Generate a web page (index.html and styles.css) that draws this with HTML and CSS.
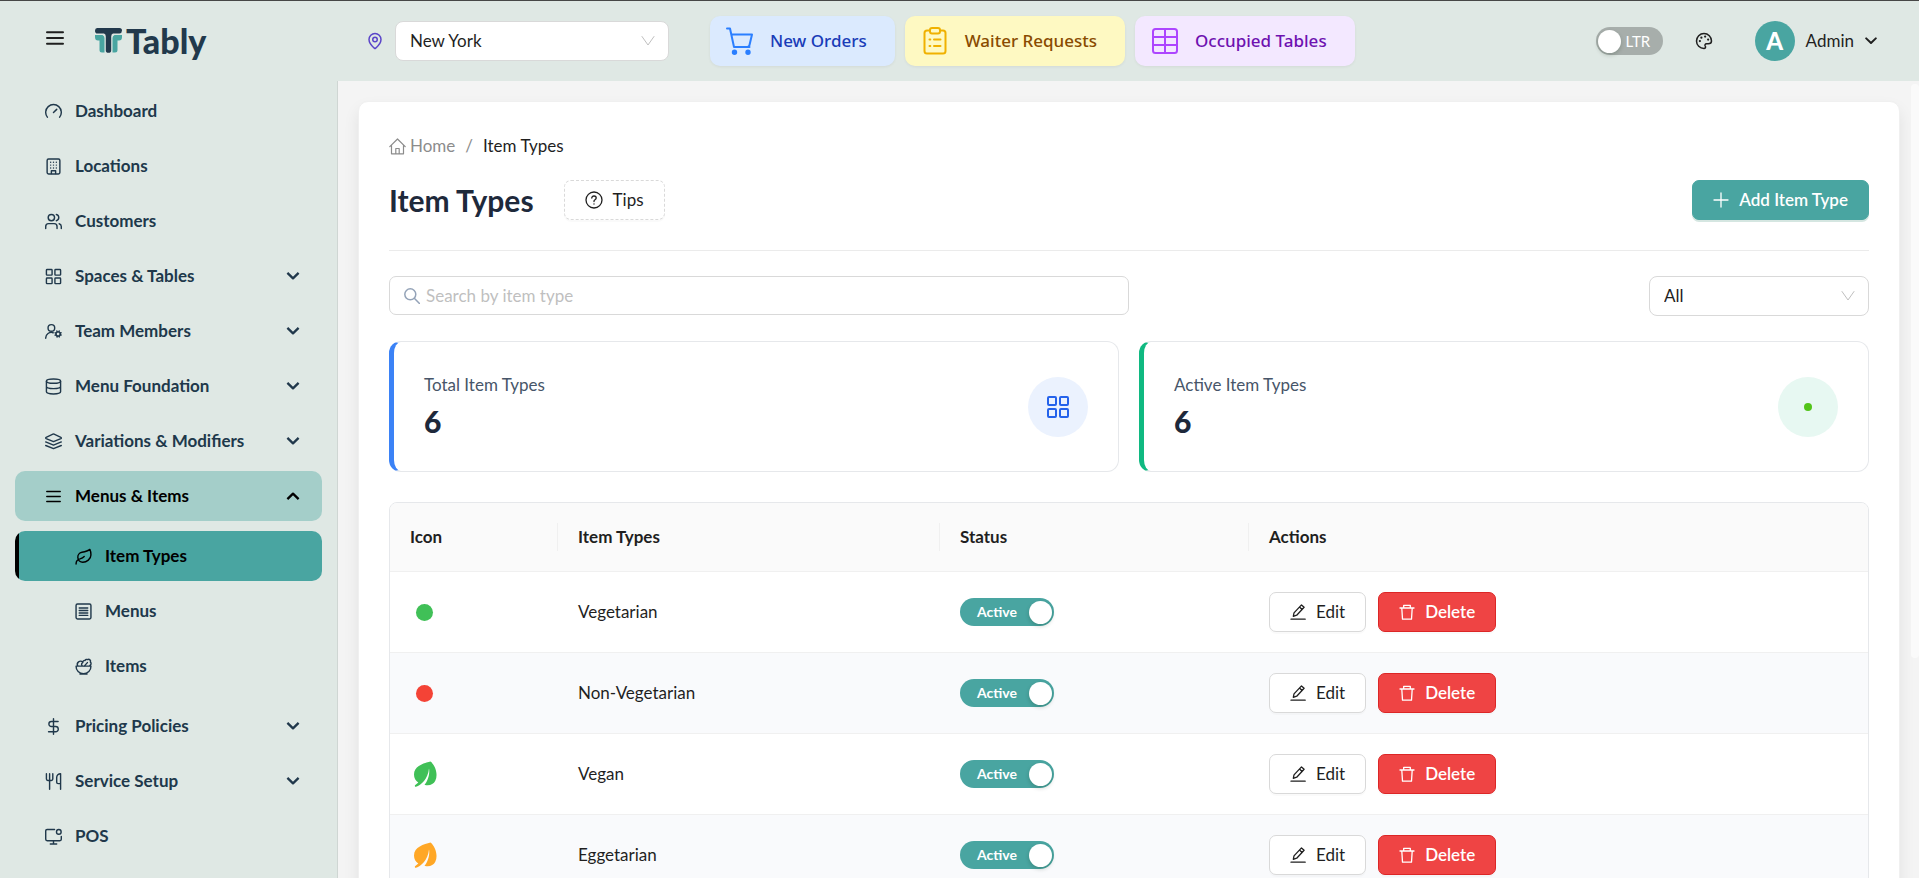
FILE: index.html
```html
<!DOCTYPE html>
<html lang="en">
<head>
<meta charset="utf-8">
<meta name="viewport" content="width=device-width, initial-scale=1">
<title>Item Types - Tably</title>
<link rel="stylesheet" href="styles.css">
</head>
<body>
<svg class="sprite" aria-hidden="true">
  <symbol id="chevron" viewBox="0 0 12 12"><path d="M1.2 3.400 6 8l4.800-4.600"/></symbol>
  <symbol id="select-arrow" viewBox="0 0 14 12"><path d="M1 1.500 7 10l6-8.500"/></symbol>
  <symbol id="edit" viewBox="0 0 16 16"><path d="M1 15.200h14.200M3.300 12.300l.7-3.400 7.500-8 2.600 2.400-7.400 7.900zM9.500 3.100l2.600 2.400"/></symbol>
  <symbol id="trash" viewBox="0 0 16 16"><path d="M1 4h14M4.700 4V1.300h6.600V4M2.800 4l.7 11.200h9L13.200 4"/></symbol>
  <symbol id="grid" viewBox="0 0 24 24"><rect x="2" y="2" width="8" height="8" rx="1"/><rect x="14" y="2" width="8" height="8" rx="1"/><rect x="14" y="14" width="8" height="8" rx="1"/><rect x="2" y="14" width="8" height="8" rx="1"/></symbol>
  <symbol id="leaf-solid" viewBox="0 0 24 26"><path d="M17.500.500C11 2 1 5 1 13.500c0 3.500 1.600 6.500 4.300 8L2 24.300c-.4.800 0 1.500 1 1.500 5-1.500 12-8 13-18.300 1 5-1 12.500-4.500 16.300 4.500 1.500 9-.3 10.800-4C25.500 13 22 4 17.500.500Z"/></symbol>
</svg>

<header class="topbar">
  <div class="brand">
    <button class="icon-button" type="button" aria-label="Toggle menu"><svg class="icon burger" viewBox="0 0 18 14"><path d="M1 1.200h16M1 7h16M1 12.800h16"/></svg></button>
    <a class="logo" href="#">
      <svg class="logo-mark" viewBox="0 0 27 26" aria-hidden="true">
        <path fill="#49a5a1" d="M0 7h7.500Q9.500 8 9.500 10v14.500H7Q4.500 24.500 4.500 22V12.500H3Q0 12.500 0 9ZM27 7h-7.500q-2 1-2 3v14.500h2.500q2.500 0 2.500-2.500v-9.500h1.500q3 0 3-3.500Z"/>
        <path fill="#22394c" d="M2.500 0h22Q27 0 27 2.500T24.500 5.500H18q-1.800.5-1.800 3v14q0 2.300-2.700 2.300t-2.700-2.300v-14q0-2.500-1.800-3H2.500Q0 5.500 0 2.700T2.500 0Z"/>
      </svg>
      <span>Tably</span>
    </a>
  </div>
  <div class="location">
    <svg class="icon pin" viewBox="0 0 24 24"><path d="M20 10c0 5-5.500 10.200-7.400 11.800a1 1 0 0 1-1.200 0C9.500 20.200 4 15 4 10a8 8 0 0 1 16 0"/><circle cx="12" cy="10" r="3"/></svg>
    <div class="select-box select-location">
      <select class="select" aria-label="Location"><option>New York</option></select>
      <svg class="select-arrow"><use href="#select-arrow"/></svg>
    </div>
  </div>
  <nav class="quick" aria-label="Quick links">
    <button class="quick-button orders" type="button"><svg class="icon" viewBox="0 0 28 28"><path d="M1 1.500h3L8 20h15.500M5.200 7.500H26l-2.500 10.500q-.5 2-2.500 2"/><circle class="solid" cx="8.500" cy="25.200" r="1.700"/><circle class="solid" cx="22" cy="25.200" r="1.700"/></svg>New Orders</button>
    <button class="quick-button waiter" type="button"><svg class="icon" viewBox="0 0 28 28"><path d="M9 3.500H6q-2.500 0-2.500 2.500v18q0 2.500 2.500 2.500h16q2.500 0 2.500-2.500V6q0-2.500-2.500-2.500h-3"/><rect x="9" y="1" width="10" height="5.500" rx="2"/><path d="M8.500 12.500h.8M13 12.500h6.500M8.500 19h.8M13 19h6.500"/></svg>Waiter Requests</button>
    <button class="quick-button tables" type="button"><svg class="icon" viewBox="0 0 28 28"><rect x="2" y="2" width="24" height="24" rx="2.500"/><path d="M2 10h24M2 18h24M14 2v24"/></svg>Occupied Tables</button>
  </nav>
  <div class="account">
    <label class="direction"><input type="checkbox" role="switch"><span class="knob"></span><span>LTR</span></label>
    <button class="icon-button" type="button" aria-label="Theme"><svg class="icon palette" viewBox="0 0 24 24"><path d="M12 22a10 10 0 1 1 10-10c0 2.500-2 3.800-4.300 3.800h-2.400c-1.800 0-2.600 1.600-1.600 3 .9 1.200.2 3.200-1.700 3.200Z"/><path class="dots" d="M6.500 12h.01M8.500 7.500h.01M13.500 6h.01M17.500 10h.01"/></svg></button>
    <button class="profile" type="button"><span class="avatar">A</span><span>Admin</span><svg class="icon caret"><use href="#chevron"/></svg></button>
  </div>
</header>

<div class="shell">
  <aside class="sidebar">
    <ul class="menu">
      <li><a class="menu-item" href="#"><svg class="icon" viewBox="0 0 24 24"><path d="m12 13.500 4.500-4.500M3.340 20a11 11 0 1 1 17.320 0"/></svg><span>Dashboard</span></a></li>
      <li><a class="menu-item" href="#"><svg class="icon" viewBox="0 0 24 24"><rect x="3" y="1.500" width="18" height="21" rx="2"/><path d="M9 22v-4h6v4M8 6h.01M16 6h.01M12 6h.01M12 10h.01M12 14h.01M16 10h.01M16 14h.01M8 10h.01M8 14h.01"/></svg><span>Locations</span></a></li>
      <li><a class="menu-item" href="#"><svg class="icon" viewBox="0 0 24 24"><path d="M17 22v-3a4 4 0 0 0-4-4H5a4 4 0 0 0-4 4v3M23 22v-3a4 4 0 0 0-3-3.870M16 2.130a4.500 4.500 0 0 1 0 8.750"/><circle cx="9" cy="6.500" r="4.500"/></svg><span>Customers</span></a></li>
      <li><a class="menu-item" href="#"><svg class="icon"><use href="#grid"/></svg><span>Spaces &amp; Tables</span><svg class="menu-caret"><use href="#chevron"/></svg></a></li>
      <li><a class="menu-item" href="#"><svg class="icon" viewBox="0 0 24 24"><path d="M1 21.500a8 8 0 0 1 10.500-7.800"/><circle cx="9" cy="7" r="4.700"/><circle cx="18.500" cy="15.500" r="3"/><path d="m22.700 17-1.200-.4M15.500 14.300l-1.200-.4M17 19.700l.4-1.200M19.600 12.500l.4-1.200M20.200 19.700l-.5-1.200M17.300 12.500l-.5-1.200M14.300 17.200l1.200-.5M21.500 14.300l1.200-.5"/></svg><span>Team Members</span><svg class="menu-caret"><use href="#chevron"/></svg></a></li>
      <li><a class="menu-item" href="#"><svg class="icon" viewBox="0 0 24 24"><ellipse cx="12" cy="4.500" rx="10" ry="3"/><path d="M2 4.500v15a10 3 0 0 0 20 0v-15M2 12a10 3 0 0 0 20 0"/></svg><span>Menu Foundation</span><svg class="menu-caret"><use href="#chevron"/></svg></a></li>
      <li><a class="menu-item" href="#"><svg class="icon" viewBox="0 0 24 24"><path d="M12.830 1.680a2 2 0 0 0-1.660 0L1.600 6.080a1 1 0 0 0 0 1.830l9.580 3.910a2 2 0 0 0 1.660 0l9.580-3.900a1 1 0 0 0 0-1.830ZM23 12.650l-10.170 4.160a2 2 0 0 1-1.660 0L1 12.650M23 17.650l-10.170 4.160a2 2 0 0 1-1.660 0L1 17.650"/></svg><span>Variations &amp; Modifiers</span><svg class="menu-caret"><use href="#chevron"/></svg></a></li>
      <li>
        <a class="menu-item open" href="#"><svg class="icon" viewBox="0 0 24 24"><path d="M2.500 5h19M2.500 12h19M2.500 19h19"/></svg><span>Menus &amp; Items</span><svg class="menu-caret"><use href="#chevron"/></svg></a>
        <ul class="submenu">
          <li><a class="menu-item current" href="#" aria-current="page"><svg class="icon" viewBox="0 0 24 24"><path d="M11 20A7 7 0 0 1 9.800 6.100C15.500 5 18 4.500 21 2c1 2 1.500 4.200 1.500 8 0 5.500-6 10-11.500 10ZM1.500 22.500c0-3.500 2.300-6.500 5.600-7.200C9.500 14.500 12 13 13 12"/></svg><span>Item Types</span></a></li>
          <li><a class="menu-item" href="#"><svg class="icon" viewBox="0 0 24 24"><rect x="1.500" y="1.500" width="21" height="21" rx="2"/><path d="M6 7h12M6 10.500h12M6 14h12M6 17.500h12"/></svg><span>Menus</span></a></li>
          <li><a class="menu-item" href="#"><svg class="icon" viewBox="0 0 24 24"><path d="M7 22.500h10M12 22a10.500 10 0 0 0 10.500-10.500h-21A10.500 10 0 0 0 12 22ZM11.380 11.500a2.600 2.600 0 0 1-.4-5 2.600 2.600 0 0 1 3.200-3 2.600 2.600 0 0 1 3.700-1.200 2.700 2.700 0 0 1 3.800 3.500 2.600 2.600 0 0 1-.6 4.500v1.200M13 11.500l4.500-5M10.900 5.800a4.500 4.500 0 0 0-7 5.500"/></svg><span>Items</span></a></li>
        </ul>
      </li>
      <li><a class="menu-item" href="#"><svg class="icon" viewBox="0 0 24 24"><path d="M12 1v22M18.500 5H9a3.500 3.500 0 0 0 0 7h6a3.500 3.500 0 0 1 0 7.500H5"/></svg><span>Pricing Policies</span><svg class="menu-caret"><use href="#chevron"/></svg></a></li>
      <li><a class="menu-item" href="#"><svg class="icon" viewBox="0 0 24 24"><path d="M2 1v7.500c0 1.100.9 2 2 2h5a2 2 0 0 0 2-2V1M6.500 1v22M22 15V1a5.500 5.500 0 0 0-5.500 5.500V13c0 1.100.9 2 2 2H22Zm0 0v8"/></svg><span>Service Setup</span><svg class="menu-caret"><use href="#chevron"/></svg></a></li>
      <li><a class="menu-item" href="#"><svg class="icon" viewBox="0 0 24 24"><circle cx="19.500" cy="5.500" r="3.300"/><path d="M23 12v4a2 2 0 0 1-2 2H3a2 2 0 0 1-2-2V4a2 2 0 0 1 2-2h10.500M12 18v4.500M7.500 22.500h9"/></svg><span>POS</span></a></li>
    </ul>
  </aside>

  <main class="main">
    <section class="panel">
      <nav class="breadcrumb" aria-label="Breadcrumb">
        <a href="#"><svg class="icon home" viewBox="0 0 17 17"><path d="M.800 8.600 8.500 1l7.700 7.600M2.500 7.500v8.300h12V7.500M6.800 15.500v-5h3.400v5"/></svg>Home</a>
        <span class="slash">/</span>
        <span class="here">Item Types</span>
      </nav>
      <div class="heading">
        <h1>Item Types</h1>
        <button class="button tips" type="button"><svg class="icon" viewBox="0 0 18 18"><circle cx="9" cy="9" r="8"/><path d="M6.800 7.100c0-1.300 1-2.100 2.200-2.100s2.200.8 2.200 2-.9 1.500-1.600 2q-.6.400-.6 1.500M9 12.800v.3"/></svg>Tips</button>
        <button class="button primary" type="button"><svg class="icon" viewBox="0 0 16 16"><path d="M8 1v14M1 8h14"/></svg>Add Item Type</button>
      </div>
      <div class="filters">
        <label class="search"><svg class="icon" viewBox="0 0 16 16"><circle cx="6.300" cy="6.300" r="5.500"/><path d="m10.300 10.300 5.200 5.200"/></svg><input type="search" placeholder="Search by item type" aria-label="Search by item type"></label>
        <div class="select-box select-status">
          <select class="select" aria-label="Status filter"><option>All</option></select>
          <svg class="select-arrow"><use href="#select-arrow"/></svg>
        </div>
      </div>
      <div class="stats">
        <div class="stat total">
          <div><p class="stat-label">Total Item Types</p><p class="stat-value">6</p></div>
          <span class="stat-icon"><svg class="icon"><use href="#grid"/></svg></span>
        </div>
        <div class="stat active">
          <div><p class="stat-label">Active Item Types</p><p class="stat-value">6</p></div>
          <span class="stat-icon"><span class="dot"></span></span>
        </div>
      </div>
      <div class="table-box">
        <table class="table">
          <colgroup><col class="col-icon"><col class="col-name"><col class="col-status"><col></colgroup>
          <thead><tr><th scope="col">Icon</th><th scope="col">Item Types</th><th scope="col">Status</th><th scope="col">Actions</th></tr></thead>
          <tbody>
            <tr>
              <td><span class="type-dot green"></span></td><td>Vegetarian</td>
              <td><label class="switch"><input type="checkbox" role="switch" checked><span>Active</span><span class="knob"></span></label></td>
              <td><div class="actions"><button class="button" type="button"><svg class="icon"><use href="#edit"/></svg>Edit</button><button class="button danger" type="button"><svg class="icon"><use href="#trash"/></svg>Delete</button></div></td>
            </tr>
            <tr>
              <td><span class="type-dot red"></span></td><td>Non-Vegetarian</td>
              <td><label class="switch"><input type="checkbox" role="switch" checked><span>Active</span><span class="knob"></span></label></td>
              <td><div class="actions"><button class="button" type="button"><svg class="icon"><use href="#edit"/></svg>Edit</button><button class="button danger" type="button"><svg class="icon"><use href="#trash"/></svg>Delete</button></div></td>
            </tr>
            <tr>
              <td><svg class="type-leaf green"><use href="#leaf-solid"/></svg></td><td>Vegan</td>
              <td><label class="switch"><input type="checkbox" role="switch" checked><span>Active</span><span class="knob"></span></label></td>
              <td><div class="actions"><button class="button" type="button"><svg class="icon"><use href="#edit"/></svg>Edit</button><button class="button danger" type="button"><svg class="icon"><use href="#trash"/></svg>Delete</button></div></td>
            </tr>
            <tr>
              <td><svg class="type-leaf orange"><use href="#leaf-solid"/></svg></td><td>Eggetarian</td>
              <td><label class="switch"><input type="checkbox" role="switch" checked><span>Active</span><span class="knob"></span></label></td>
              <td><div class="actions"><button class="button" type="button"><svg class="icon"><use href="#edit"/></svg>Edit</button><button class="button danger" type="button"><svg class="icon"><use href="#trash"/></svg>Delete</button></div></td>
            </tr>
          </tbody>
        </table>
      </div>
    </section>
  </main>
</div>
</body>
</html>
```

FILE: styles.css
```css
:root {
  --teal: #49a5a1;
  --surface: #dfe8e4;
  --ink: #1f1f1f;
  --navy: #20384b;
  --line: #d9d9d9;
}

* { box-sizing: border-box; }

body {
  margin: 0;
  height: 100vh;
  display: flex;
  flex-direction: column;
  overflow: hidden;
  border-top: 1px solid #474747;
  background: #f4f4f4;
  color: var(--ink);
  font: 17px/24px Lato, "Liberation Sans", sans-serif;
}

a { color: inherit; text-decoration: none; }
ul { list-style: none; margin: 0; padding: 0; }
h1, p { margin: 0; }
button, input, select { font: inherit; color: inherit; }
button { cursor: pointer; }
.sprite { display: none; }

.icon, .select-arrow, .menu-caret {
  flex: none;
  fill: none;
  stroke: currentColor;
  stroke-linecap: round;
  stroke-linejoin: round;
}
.icon { width: 16px; height: 16px; }

/* Top bar */
.topbar {
  flex: none;
  display: flex;
  align-items: center;
  height: 80px;
  padding: 0 42px 0 40px;
  background: var(--surface);
}
.brand { display: flex; align-items: center; gap: 25px; width: 326px; }
.icon-button { display: grid; place-items: center; padding: 6px; border: 0; background: none; }
.burger { width: 18px; height: 14px; stroke-width: 2; margin-bottom: 6px; }
.logo { display: flex; align-items: center; gap: 4px; color: #22394c; font-size: 34px; line-height: 40px; font-weight: 900; }
.logo-mark { width: 27px; height: 26px; }
.location { display: flex; align-items: center; gap: 11px; margin-right: 41px; }
.pin { width: 18px; height: 18px; stroke-width: 2; color: #5b45c9; }

.select-box { position: relative; }
.select {
  display: block;
  width: 100%;
  height: 40px;
  padding: 0 40px 0 14px;
  appearance: none;
  border: 1px solid var(--line);
  border-radius: 8px;
  background: #fff;
}
.select-arrow {
  position: absolute;
  top: 14px;
  right: 14px;
  width: 14px;
  height: 12px;
  stroke: #bfbfbf;
  pointer-events: none;
}
.select-location { width: 274px; }
.select-status { width: 220px; }

.quick { display: flex; gap: 10px; }
.quick-button {
  display: flex;
  align-items: center;
  gap: 16px;
  height: 50px;
  padding: 0 28px 0 16px;
  border: 0;
  border-radius: 10px;
  box-shadow: 0 1px 3px rgba(0, 0, 0, .06);
  font: 500 17px/24px "Noto Sans", "Open Sans", sans-serif;
}
.quick-button .icon { width: 28px; height: 28px; stroke-width: 2; }
.quick-button .solid { fill: currentColor; }
.orders { background: #dbeafe; color: #193cb8; }
.orders .icon { color: #2b7fff; }
.waiter { background: #fef9c2; color: #894b00; }
.waiter .icon { color: #f0b100; }
.tables { background: #f3e8ff; color: #6e11b0; }
.tables .icon { color: #ad46ff; }

.account { display: flex; align-items: center; margin-left: auto; gap: 26px; }
.direction, .switch { display: inline-flex; align-items: center; height: 28px; border-radius: 14px; color: #fff; cursor: pointer; }
.direction input, .switch input { position: absolute; opacity: 0; width: 1px; height: 1px; margin: 0; }
.direction { gap: 5px; width: 67px; padding-left: 2px; background: #a7aeab; font-size: 15px; }
.knob { width: 23px; height: 23px; border-radius: 50%; background: #fff; box-shadow: 0 2px 4px rgba(0, 35, 11, .2); }
.palette { width: 18px; height: 18px; stroke-width: 2; }
.palette .dots { stroke-width: 3; }
.profile { display: flex; align-items: center; gap: 11px; padding: 0; border: 0; background: none; margin-left: 10px; }
.avatar {
  display: grid;
  place-items: center;
  width: 40px;
  height: 40px;
  border-radius: 50%;
  background: var(--teal);
  color: #fff;
  font-size: 24px;
  font-weight: 900;
}
.caret { width: 12px; height: 12px; stroke-width: 2; }

/* Sidebar */
.shell { position: relative; flex: 1; min-height: 0; display: flex; }
.shell::after { content: ""; position: absolute; top: 3px; right: 0; width: 8px; height: 72%; border-radius: 4px; background: #fafafa; }
.sidebar {
  flex: none;
  width: 338px;
  overflow: hidden;
  padding: 5px 15px;
  border-right: 1px solid #cfd6d3;
  background: var(--surface);
  color: var(--navy);
  font-weight: 700;
}
.menu, .submenu { display: flex; flex-direction: column; gap: 5px; }
.submenu { padding: 10px 0 5px; }
.menu-item {
  display: flex;
  align-items: center;
  gap: 13px;
  height: 50px;
  padding: 0 22px 0 30px;
  border-radius: 10px;
}
.menu-item .icon { width: 17px; height: 17px; stroke-width: 2; }
.menu-caret { width: 14px; height: 14px; margin-left: auto; stroke-width: 2; stroke-linecap: butt; }
.submenu .menu-item { padding-left: 60px; }
.open { background: #a4cec9; color: #000; }
.open .menu-caret { transform: rotate(180deg); }
.submenu .current { background: linear-gradient(to right, #000 4px, var(--teal) 4px); color: #000; }

/* Main panel */
.main { flex: 1; min-width: 0; overflow: auto; scrollbar-width: none; padding: 20px 19px 20px 20px; }
.panel {
  padding: 30px;
  border: 1px solid #f0f0f0;
  border-radius: 10px;
  background: #fff;
  box-shadow: 0 8px 16px rgba(0, 0, 0, .08);
}
.breadcrumb { display: flex; align-items: center; gap: 10px; height: 28px; color: #8c8c8c; }
.breadcrumb a { display: flex; align-items: center; gap: 4px; }
.breadcrumb .here { color: var(--ink); }
.home { width: 17px; height: 17px; stroke-width: 1.200; }
.heading {
  display: flex;
  align-items: center;
  margin-top: 20px;
  padding-bottom: 30px;
  border-bottom: 1px solid #ebebeb;
}
h1 { margin-right: 30px; color: #1e293b; font-size: 30px; line-height: 40px; font-weight: 700; }

.button {
  display: inline-flex;
  align-items: center;
  gap: 10px;
  height: 40px;
  padding: 0 20px;
  border: 1px solid var(--line);
  border-radius: 7px;
  background: #fff;
  box-shadow: 0 2px 0 rgba(0, 0, 0, .02);
}
.button .icon { stroke-width: 1.300; }
.tips { border-style: dashed; }
.tips .icon { width: 18px; height: 18px; }
.primary { margin-left: auto; border-color: var(--teal); background: var(--teal); color: #fff; font-weight: 600; box-shadow: 0 2px 0 #d5e6e1; }
.danger { border-color: #dc2626; background: #ef4444; color: #fff; font-weight: 600; }

.filters { display: flex; align-items: flex-start; justify-content: space-between; margin: 25px 0; }
.search {
  display: flex;
  align-items: center;
  gap: 6px;
  width: 50%;
  height: 39px;
  padding: 0 14px;
  border: 1px solid var(--line);
  border-radius: 7px;
}
.search .icon { color: #94a3b8; stroke-width: 1.500; }
.search input { flex: 1; min-width: 0; padding: 0; border: 0; outline: 0; background: none; }
.search input::placeholder { color: #bfbfbf; }

.stats { display: grid; grid-template-columns: 1fr 1fr; gap: 20px; margin-bottom: 30px; }
.stat {
  display: flex;
  align-items: center;
  justify-content: space-between;
  padding: 30px;
  border: 1px solid #e6e8eb;
  border-left-width: 5px;
  border-radius: 12px;
}
.total { border-left-color: #3b82f6; }
.active { border-left-color: #10b981; }
.stat-label { margin-bottom: 3px; line-height: 26px; color: #475569; }
.stat-value { color: #1e293b; font-size: 30px; line-height: 40px; font-weight: 900; }
.stat-icon { display: grid; place-items: center; width: 60px; height: 60px; border-radius: 50%; }
.total .stat-icon { background: #ebf2fe; color: #2563eb; }
.active .stat-icon { background: #e7f8f2; }
.stat-icon .icon { width: 24px; height: 24px; stroke-width: 2; }
.dot { width: 8px; height: 8px; border-radius: 50%; background: #52c41a; }

/* Table */
.table-box { overflow: hidden; border: 1px solid #e6e8eb; border-radius: 8px; }
.table { width: 100%; table-layout: fixed; border-collapse: separate; border-spacing: 0; }
.col-icon { width: 168px; }
.col-name { width: 382px; }
.col-status { width: 309px; }
.table th { position: relative; height: 69px; padding: 0 20px; border-bottom: 1px solid #f0f0f0; background: #fafafa; text-align: left; font-weight: 700; }
.table th:not(:last-child)::after { content: ""; position: absolute; top: 20px; right: 0; width: 1px; height: 28px; background: #f0f0f0; }
.table td { height: 81px; padding: 0 20px; border-bottom: 1px solid #f0f0f0; }
.table tbody tr:nth-child(even) { background: #f9fafc; }
.type-dot { display: block; width: 17px; height: 17px; margin-left: 6px; border-radius: 50%; background: currentColor; }
.type-leaf { display: block; width: 24px; height: 26px; margin-left: 3px; fill: currentColor; }
.green { color: #40c057; }
.red { color: #f44336; }
.orange { color: #ffa726; }
.switch { width: 94px; justify-content: space-between; padding: 0 2px 0 17px; background: var(--teal); font-size: 14px; font-weight: 700; vertical-align: middle; }
.actions { display: flex; gap: 12px; }
```
